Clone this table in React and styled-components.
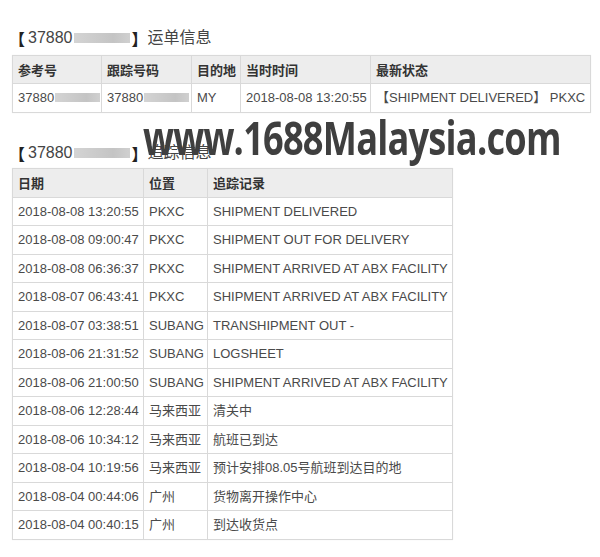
import React from "react";
import styled, { createGlobalStyle } from "styled-components";

const GlobalStyle = createGlobalStyle`
  body {
    margin: 0;
    background: #fff;
    font-family: "Liberation Sans", Arial, "Noto Sans CJK SC", sans-serif;
    color: #444;
  }
`;

const Page = styled.div`
  position: relative;
  width: 600px;
  height: 557px;
  padding: 27px 0 0 12px;
  box-sizing: border-box;
  overflow: hidden;
`;

const Title = styled.div`
  display: flex;
  align-items: center;
  height: 22px;
  line-height: 22px;
  font-size: 16px;
  color: #444;
  margin: ${(p) => p.$margin || "0"};
  font-family: "Liberation Sans", "Noto Sans CJK SC", sans-serif;
`;

const Bracket = styled.span`
  font-family: "Noto Sans CJK SC", sans-serif;
  font-weight: 700;
  color: #222;
  margin: ${(p) => (p.$right ? "0 0 0 2px" : "0 3px 0 -3px")};
`;

const Mask = styled.span`
  display: inline-block;
  width: ${(p) => p.$w}px;
  height: ${(p) => p.$h || 9}px;
  margin-left: 1px;
  background: linear-gradient(to right, #d4d4d4, #c4c4c4 70%, #d0d0d0);
  filter: blur(0.6px);
`;

const Table = styled.table`
  border-collapse: collapse;
  table-layout: fixed;
  width: ${(p) => p.$w}px;
  margin-top: ${(p) => p.$top}px;
  font-size: 13px;
  box-shadow: 0 0 1px rgba(0, 0, 0, 0.08);
`;

const Th = styled.th`
  background: #ededed;
  border: 1px solid #d9d9d9;
  height: ${(p) => p.$h || 27}px;
  line-height: 16px;
  padding: 0 0 0 5px;
  text-align: left;
  font-weight: 700;
  color: #333;
  font-family: "Noto Sans CJK SC", sans-serif;
  font-size: 13px;
  white-space: nowrap;
`;

const Td = styled.td`
  border: 1px solid #d9d9d9;
  height: ${(p) => p.$h || 27}px;
  line-height: 16px;
  padding: 0 0 0 5px;
  white-space: nowrap;
  color: #4a4a4a;
  font-family: "Liberation Sans", Arial, "Noto Sans CJK SC", sans-serif;
`;

const Watermark = styled.div`
  position: absolute;
  left: 143px;
  top: 106px;
  font-family: "Open Sans", sans-serif;
  font-weight: 700;
  font-size: 46px;
  letter-spacing: -1px;
  color: #3f3f3f;
  transform: scaleX(0.787);
  transform-origin: left top;
  white-space: nowrap;
`;

const rows = [
  ["2018-08-08 13:20:55", "PKXC", "SHIPMENT DELIVERED"],
  ["2018-08-08 09:00:47", "PKXC", "SHIPMENT OUT FOR DELIVERY"],
  ["2018-08-08 06:36:37", "PKXC", "SHIPMENT ARRIVED AT ABX FACILITY"],
  ["2018-08-07 06:43:41", "PKXC", "SHIPMENT ARRIVED AT ABX FACILITY"],
  ["2018-08-07 03:38:51", "SUBANG", "TRANSHIPMENT OUT -"],
  ["2018-08-06 21:31:52", "SUBANG", "LOGSHEET"],
  ["2018-08-06 21:00:50", "SUBANG", "SHIPMENT ARRIVED AT ABX FACILITY"],
  ["2018-08-06 12:28:44", "马来西亚", "清关中"],
  ["2018-08-06 10:34:12", "马来西亚", "航班已到达"],
  ["2018-08-04 10:19:56", "马来西亚", "预计安排08.05号航班到达目的地"],
  ["2018-08-04 00:44:06", "广州", "货物离开操作中心"],
  ["2018-08-04 00:40:15", "广州", "到达收货点"],
];

const App = () => (
  <>
    <GlobalStyle />
    <Page>
      <Title>
        <Bracket>【</Bracket>37880<Mask $w={56} $h={10} />
        <Bracket $right>】</Bracket>运单信息
      </Title>
      <Table $w={579} $top={6}>
        <colgroup>
          <col style={{ width: 89 }} />
          <col style={{ width: 90 }} />
          <col style={{ width: 49 }} />
          <col style={{ width: 130 }} />
          <col />
        </colgroup>
        <thead>
          <tr>
            <Th>参考号</Th>
            <Th>跟踪号码</Th>
            <Th>目的地</Th>
            <Th>当时时间</Th>
            <Th>最新状态</Th>
          </tr>
        </thead>
        <tbody>
          <tr>
            <Td $h={28}>37880<Mask $w={45} /></Td>
            <Td $h={28}>37880<Mask $w={45} /></Td>
            <Td $h={28}>MY</Td>
            <Td $h={28}>2018-08-08 13:20:55</Td>
            <Td $h={28}>【SHIPMENT DELIVERED】 PKXC</Td>
          </tr>
        </tbody>
      </Table>

      <Title $margin="29px 0 0 0">
        <Bracket>【</Bracket>37880<Mask $w={56} $h={10} />
        <Bracket $right>】</Bracket>追踪信息
      </Title>
      <Table $w={441} $top={4}>
        <colgroup>
          <col style={{ width: 131 }} />
          <col style={{ width: 64 }} />
          <col />
        </colgroup>
        <thead>
          <tr>
            <Th $h={28}>日期</Th>
            <Th $h={28}>位置</Th>
            <Th $h={28}>追踪记录</Th>
          </tr>
        </thead>
        <tbody>
          {rows.map((r, i) => (
            <tr key={i}>
              <Td $h={i % 2 ? 28 : 27}>{r[0]}</Td>
              <Td $h={i % 2 ? 28 : 27}>{r[1]}</Td>
              <Td $h={i % 2 ? 28 : 27}>{r[2]}</Td>
            </tr>
          ))}
        </tbody>
      </Table>
      <Watermark>www.1688Malaysia.com</Watermark>
    </Page>
  </>
);

export default App;
